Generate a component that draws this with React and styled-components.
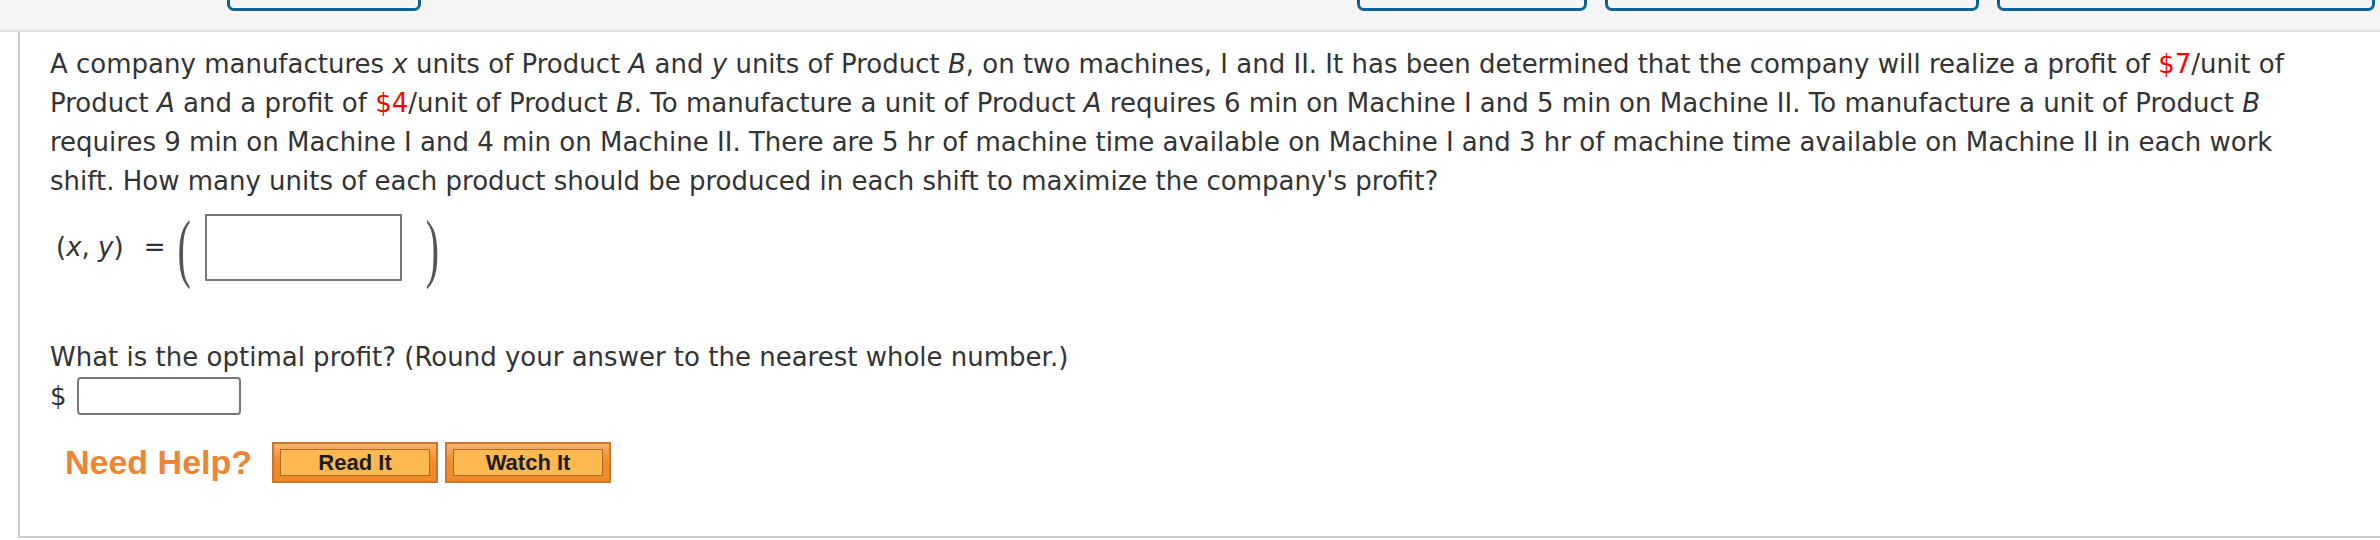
import React from 'react'
import styled, { createGlobalStyle } from 'styled-components'

const GlobalStyle = createGlobalStyle`
  html, body {
    margin: 0;
    padding: 0;
    background: #fff;
  }
  body {
    font-family: "DejaVu Sans", Verdana, sans-serif;
  }
`

// top strip with the cut-off tab buttons
const TopBar = styled.div`
  display: flex;
  justify-content: space-between;
  align-items: flex-start;
  height: 30px;
  padding: 0 5px 0 227px;
  background: #f5f5f5;
  border-bottom: 2px solid #e0e0e0;
`

const TabGroup = styled.div`
  display: flex;
  gap: 18px;
`

const Tab = styled.div`
  box-sizing: border-box;
  width: ${p => p.w}px;
  height: 11px;
  border: 3px solid #0f6496;
  border-top: none;
  border-radius: 0 0 7px 7px;
`

const Panel = styled.div`
  box-sizing: border-box;
  height: 506px;
  margin-left: 18px;
  padding: 13px 0 0 30px;
  border-left: 2px solid #cfcfcf;
  border-bottom: 2px solid #cfcfcf;
  color: #333;
  font-size: 26px;
  line-height: 39px;
`

const Question = styled.div`
  white-space: nowrap;
`

const Var = styled.i`
  font-style: italic;
`

const Red = styled.span`
  color: #f00;
`

const AnswerRow = styled.div`
  display: flex;
  align-items: center;
  height: 67px;
  margin-top: 13px;
  padding-left: 6px;
`

const Pair = styled.span`
  margin-right: 20px;
`

const Equals = styled.span`
  margin-right: 12px;
`

const Paren = styled.span`
  display: inline-block;
  font-family: "Liberation Serif", serif;
  font-size: 40px;
  line-height: 40px;
  color: #555;
  transform: scaleY(1.9);
  margin: ${p => p.m};
`

const Box = styled.div`
  box-sizing: border-box;
  width: ${p => p.w}px;
  height: ${p => p.h}px;
  border: 2px solid #777;
  border-radius: ${p => p.r || 0}px;
  background: #fff;
`

const Prompt = styled.div`
  margin-top: 57px;
`

const DollarRow = styled.div`
  display: flex;
  align-items: center;
  gap: 10px;
  height: 38px;
`

const HelpRow = styled.div`
  display: flex;
  align-items: center;
  gap: 7px;
  margin-top: 27px;
  padding-left: 15px;
`

const NeedHelp = styled.span`
  font-family: "Liberation Sans", Arial, sans-serif;
  font-weight: bold;
  font-size: 34px;
  color: #ef8534;
  margin-right: 13px;
`

const HelpButton = styled.div`
  box-sizing: border-box;
  width: 166px;
  height: 41px;
  padding: 5px 6px;
  border: 2px solid #c9772f;
  background: linear-gradient(#f7b56a, #f08d2c 45%, #ef8a28);
`

const HelpLabel = styled.div`
  box-sizing: border-box;
  display: flex;
  align-items: center;
  justify-content: center;
  height: 100%;
  border: 1px solid #a9692f;
  background: #fbb94f;
  font-family: "Liberation Sans", Arial, sans-serif;
  font-weight: bold;
  font-size: 22px;
  color: #1c1c1c;
`

const App = () => (
  <>
    <GlobalStyle />
    <TopBar>
      <TabGroup>
        <Tab w={194} />
      </TabGroup>
      <TabGroup>
        <Tab w={230} />
        <Tab w={374} />
        <Tab w={378} />
      </TabGroup>
    </TopBar>

    <Panel>
      <Question>
        A company manufactures <Var>x</Var> units of Product <Var>A</Var> and{' '}
        <Var>y</Var> units of Product <Var>B</Var>, on two machines, I and II. It
        has been determined that the company will realize a profit of <Red>$7</Red>
        /unit of
        <br />
        Product <Var>A</Var> and a profit of <Red>$4</Red>/unit of Product{' '}
        <Var>B</Var>. To manufacture a unit of Product <Var>A</Var> requires 6 min
        on Machine I and 5 min on Machine II. To manufacture a unit of Product{' '}
        <Var>B</Var>
        <br />
        requires 9 min on Machine I and 4 min on Machine II. There are 5 hr of
        machine time available on Machine I and 3 hr of machine time available on
        Machine II in each work
        <br />
        shift. How many units of each product should be produced in each shift to
        maximize the company's profit?
      </Question>

      <AnswerRow>
        <Pair>
          (<Var>x</Var>, <Var>y</Var>)
        </Pair>
        <Equals>=</Equals>
        <Paren m="0 14px 0 0">(</Paren>
        <Box w={197} h={67} />
        <Paren m="0 0 0 24px">)</Paren>
      </AnswerRow>

      <Prompt>
        What is the optimal profit? (Round your answer to the nearest whole number.)
      </Prompt>
      <DollarRow>
        <span>$</span>
        <Box w={164} h={38} r={4} />
      </DollarRow>

      <HelpRow>
        <NeedHelp>Need Help?</NeedHelp>
        <HelpButton>
          <HelpLabel>Read It</HelpLabel>
        </HelpButton>
        <HelpButton>
          <HelpLabel>Watch It</HelpLabel>
        </HelpButton>
      </HelpRow>
    </Panel>
  </>
)

export default App
